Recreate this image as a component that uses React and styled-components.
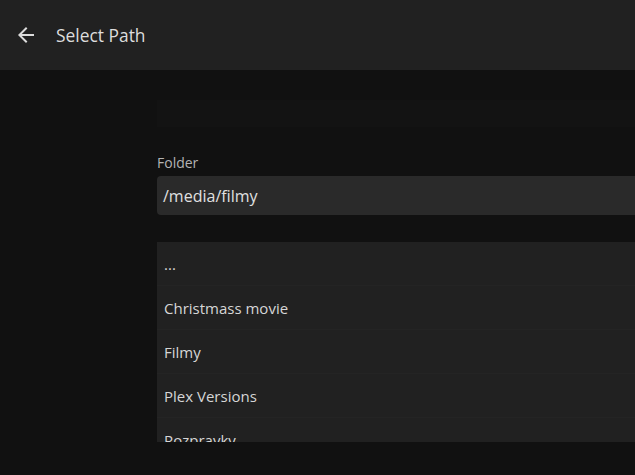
import React from "react";
import styled, { createGlobalStyle } from "styled-components";

const Global = createGlobalStyle`
  html, body {
    margin: 0;
    padding: 0;
    background: #111111;
    overflow: hidden;
  }
  body {
    font-family: "Open Sans", "Noto Sans", sans-serif;
    color: #dddddd;
  }
`;

const Page = styled.div`
  width: 635px;
  height: 475px;
  background: #111111;
  overflow: hidden;
  display: flex;
  flex-direction: column;
`;

const Header = styled.header`
  height: 70px;
  flex: none;
  background: #212121;
  display: flex;
  align-items: center;
  padding-left: 14px;
`;

const BackButton = styled.button`
  width: 24px;
  height: 24px;
  padding: 0;
  border: 0;
  background: none;
  color: #dcdcdc;
  display: flex;
  align-items: center;
  justify-content: center;
  cursor: pointer;
`;

const Title = styled.h1`
  margin: 0 0 0 18px;
  font-size: 17.4px;
  font-weight: 400;
  color: #dddddd;
`;

const Main = styled.main`
  flex: 1;
  padding: 30px 0 0 157px;
  display: flex;
  flex-direction: column;
  min-width: 0;
`;

const Column = styled.div`
  width: 620px;
  display: flex;
  flex-direction: column;
`;

const Toolbar = styled.div`
  height: 27px;
  background: #131313;
`;

const Label = styled.label`
  margin-top: 26px;
  font-size: 14px;
  line-height: 20px;
  color: #b4b4b4;
`;

const PathInput = styled.div`
  margin-top: 3px;
  height: 39px;
  background: #2a2a2a;
  border-radius: 4px;
  display: flex;
  align-items: center;
  padding-left: 6px;
  font-size: 16px;
  color: #e0e0e0;
`;

const List = styled.ul`
  list-style: none;
  margin: 27px 0 0 0;
  padding: 0;
  height: 200px;
  background: #212121;
  overflow: hidden;
`;

const Row = styled.li`
  height: 43px;
  border-bottom: 1px solid #242424;
  display: flex;
  align-items: center;
  padding-left: 7px;
  font-size: 15px;
  color: #d6d6d6;
`;

const ArrowBack = () => (
  <svg width="24" height="24" viewBox="0 0 24 24" fill="currentColor">
    <path d="M20 11H7.83l5.59-5.59L12 4l-8 8 8 8 1.41-1.41L7.83 13H20v-2z" />
  </svg>
);

const entries = ["...", "Christmass movie", "Filmy", "Plex Versions", "Rozpravky"];

export default function App() {
  return (
    <>
      <Global />
      <Page>
        <Header>
          <BackButton aria-label="Back">
            <ArrowBack />
          </BackButton>
          <Title>Select Path</Title>
        </Header>
        <Main>
          <Column>
            <Toolbar />
            <Label>Folder</Label>
            <PathInput>/media/filmy</PathInput>
            <List>
              {entries.map((e) => (
                <Row key={e}>{e}</Row>
              ))}
            </List>
          </Column>
        </Main>
      </Page>
    </>
  );
}
